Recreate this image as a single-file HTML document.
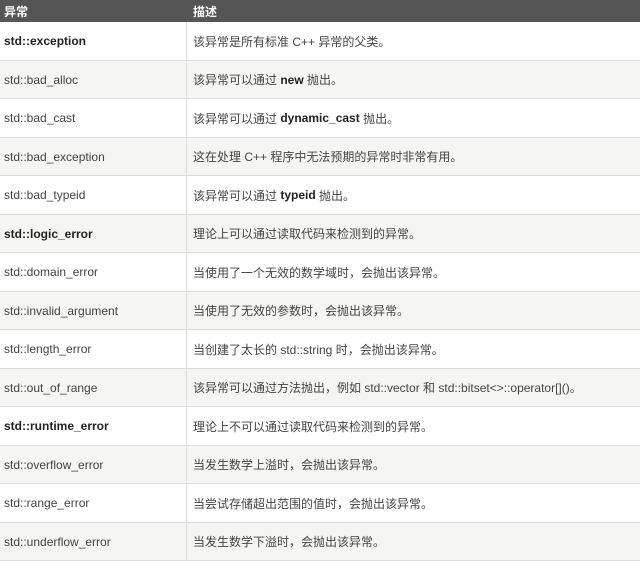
<!DOCTYPE html>
<html><head><meta charset="utf-8"><style>
body{margin:0;width:640px;height:561px;overflow:hidden;background:#fff;font-family:"Liberation Sans","Noto Sans CJK SC",sans-serif;font-size:12px;color:#444}
.r{position:absolute;left:0;width:640px;border-bottom:1px solid #ddd;box-sizing:border-box}
.r div{position:absolute;top:0;bottom:0;display:flex;align-items:center}
.a{left:4px}.b{left:193px}
.r:before{content:"";position:absolute;left:186px;top:0;bottom:0;border-left:1px solid #ddd}
.g{background:#f5f5f3}
.h{background:#555;color:#fff;font-weight:bold;border:none}
.h:before{display:none}
b{color:#222}
</style></head><body>
<div class="r h" style="top:0;height:22px"><div class="a">异常</div><div class="b">描述</div></div>
<div class="r" style="top:22px;height:39px"><div class="a"><b>std::exception</b></div><div class="b">该异常是所有标准 C++ 异常的父类。</div></div>
<div class="r g" style="top:61px;height:38px"><div class="a">std::bad_alloc</div><div class="b">该异常可以通过&nbsp;<b>new</b>&nbsp;抛出。</div></div>
<div class="r" style="top:99px;height:39px"><div class="a">std::bad_cast</div><div class="b">该异常可以通过&nbsp;<b>dynamic_cast</b>&nbsp;抛出。</div></div>
<div class="r g" style="top:138px;height:38px"><div class="a">std::bad_exception</div><div class="b">这在处理 C++ 程序中无法预期的异常时非常有用。</div></div>
<div class="r" style="top:176px;height:39px"><div class="a">std::bad_typeid</div><div class="b">该异常可以通过&nbsp;<b>typeid</b>&nbsp;抛出。</div></div>
<div class="r g" style="top:215px;height:38px"><div class="a"><b>std::logic_error</b></div><div class="b">理论上可以通过读取代码来检测到的异常。</div></div>
<div class="r" style="top:253px;height:39px"><div class="a">std::domain_error</div><div class="b">当使用了一个无效的数学域时，会抛出该异常。</div></div>
<div class="r g" style="top:292px;height:38px"><div class="a">std::invalid_argument</div><div class="b">当使用了无效的参数时，会抛出该异常。</div></div>
<div class="r" style="top:330px;height:39px"><div class="a">std::length_error</div><div class="b">当创建了太长的 std::string 时，会抛出该异常。</div></div>
<div class="r g" style="top:369px;height:38px"><div class="a">std::out_of_range</div><div class="b">该异常可以通过方法抛出，例如 std::vector 和 std::bitset&lt;&gt;::operator[]()。</div></div>
<div class="r" style="top:407px;height:39px"><div class="a"><b>std::runtime_error</b></div><div class="b">理论上不可以通过读取代码来检测到的异常。</div></div>
<div class="r g" style="top:446px;height:38px"><div class="a">std::overflow_error</div><div class="b">当发生数学上溢时，会抛出该异常。</div></div>
<div class="r" style="top:484px;height:39px"><div class="a">std::range_error</div><div class="b">当尝试存储超出范围的值时，会抛出该异常。</div></div>
<div class="r g" style="top:523px;height:38px"><div class="a">std::underflow_error</div><div class="b">当发生数学下溢时，会抛出该异常。</div></div>
</body></html>
